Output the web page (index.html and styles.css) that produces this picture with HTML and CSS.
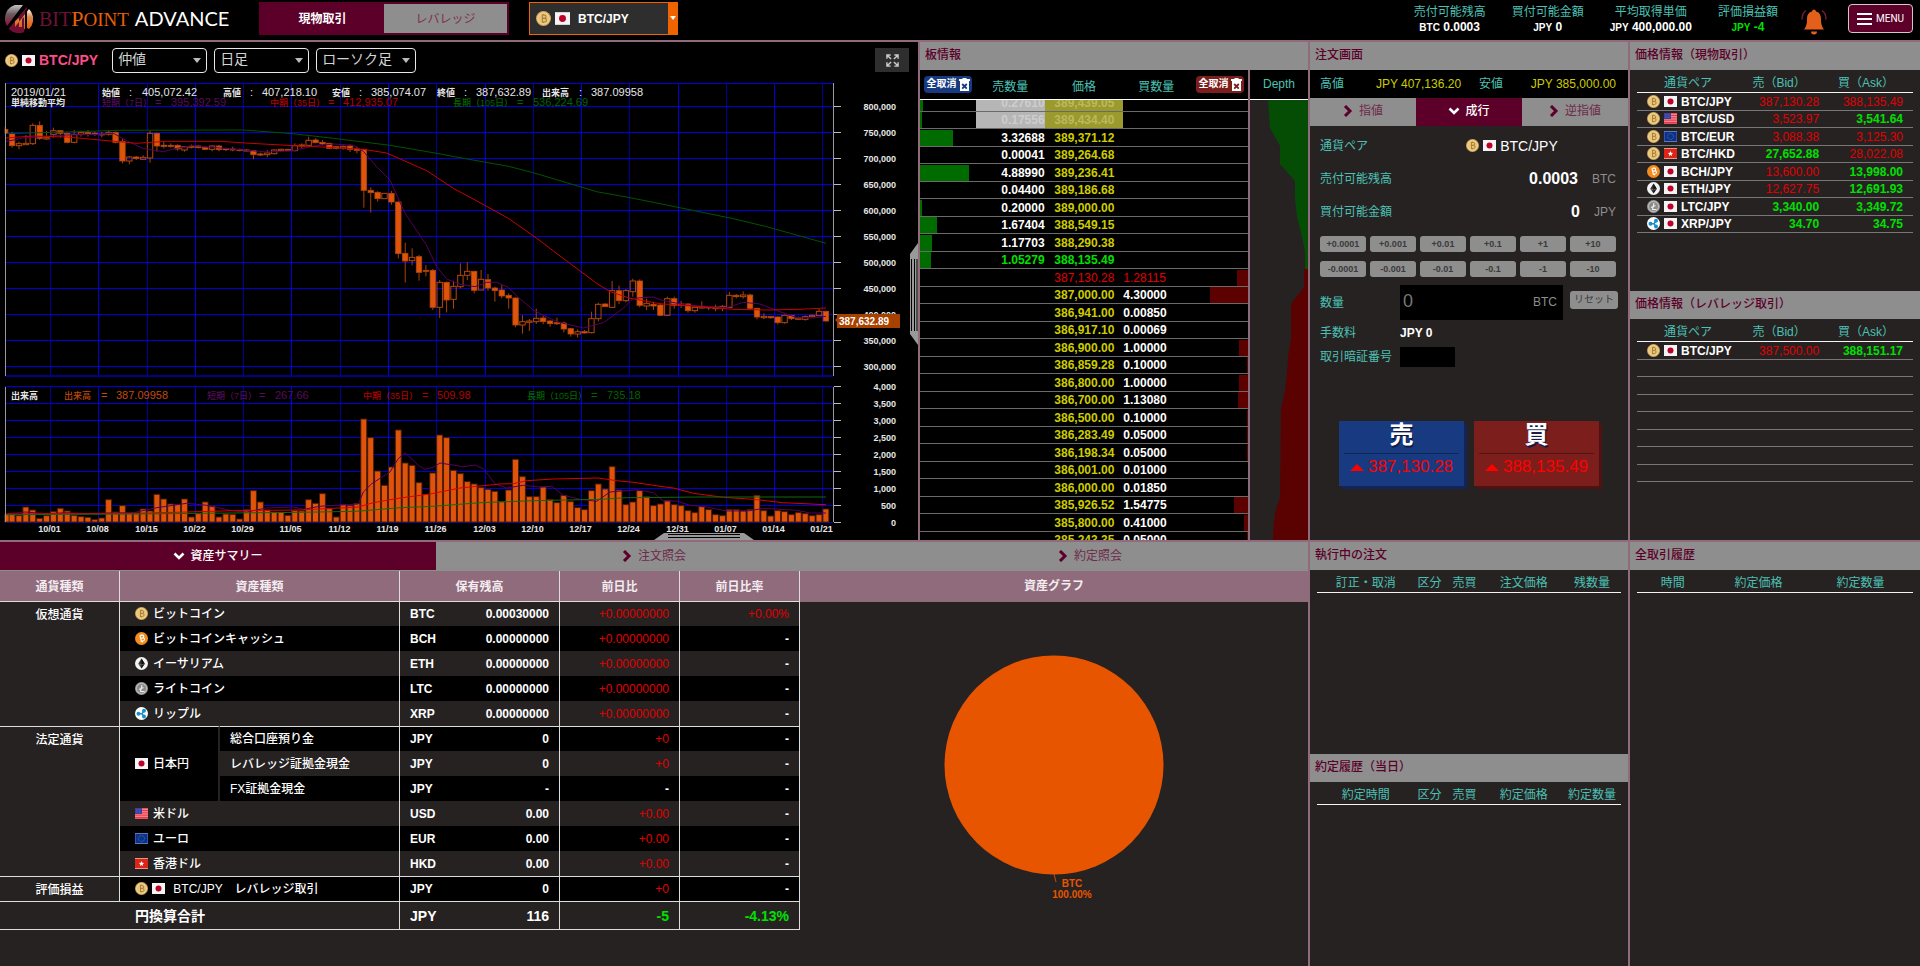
FILE: index.html
```html
<!DOCTYPE html>
<html lang="ja">
<head>
<meta charset="utf-8">
<title>BITPoint ADVANCE</title>
<link rel="stylesheet" href="styles.css">
</head>
<body>
<svg class="defs" aria-hidden="true">
  <defs>
    <linearGradient id="lg1" x1="0" y1="0" x2="0" y2="1"><stop offset="0" stop-color="#c9c9c9"/><stop offset=".45" stop-color="#6b5a60"/><stop offset="1" stop-color="#8a1136"/></linearGradient>
    <linearGradient id="lg2" x1="0" y1="0" x2="0" y2="1"><stop offset="0" stop-color="#fff"/><stop offset=".4" stop-color="#d98a4a"/><stop offset="1" stop-color="#e85a05"/></linearGradient>
    <symbol id="btc" viewBox="0 0 26 26"><circle cx="13" cy="13" r="13" fill="#d4a656"/><circle cx="13" cy="13" r="10" fill="#e6c478" stroke="#f5e2aa" stroke-width="1.500"/><path d="M10 7h4.500a2.800 2.800 0 0 1 0 5.800H11h4a3 3 0 0 1 0 6.200h-5M11 7v12M12.500 5v2M12.500 19v2" fill="none" stroke="#a87c38" stroke-width="1.800"/></symbol>
    <symbol id="bch" viewBox="0 0 26 26"><circle cx="13" cy="13" r="13" fill="#f68b1f"/><path d="M9 8l5-1.500a2.700 2.700 0 0 1 1.500 5.200L11 13l4.500-1.200a3 3 0 0 1 1.500 5.800L11.500 19M10 8l3 11M12 5l.6 2M14.500 18.500l.6 2" fill="none" stroke="#fff" stroke-width="2.200"/></symbol>
    <symbol id="eth" viewBox="0 0 26 26"><circle cx="13" cy="13" r="13" fill="#f4f4f4"/><path d="M13 3l6.500 10.500L13 23 6.500 13.500z" fill="#333"/><path d="M13 3v20l6.500-9.500z" fill="#111"/><path d="M6.500 13.500L13 16l6.500-2.500" fill="none" stroke="#aaa" stroke-width="1"/></symbol>
    <symbol id="ltc" viewBox="0 0 26 26"><circle cx="13" cy="13" r="13" fill="#9b9b9b"/><circle cx="13" cy="13" r="10" fill="#8a8a8a" stroke="#cfcfcf" stroke-width="1.500"/><path d="M14 6l-3 13h8M8 15l9-4" fill="none" stroke="#eee" stroke-width="2.200"/></symbol>
    <symbol id="xrp" viewBox="0 0 26 26"><circle cx="13" cy="13" r="13" fill="#fff"/><path d="M7 13.500h7l4-6M14 13.500l4 6" fill="none" stroke="#1a8fd0" stroke-width="3"/><circle cx="7" cy="13.500" r="4" fill="#1a8fd0"/><circle cx="18" cy="7.500" r="4" fill="#1a8fd0"/><circle cx="18" cy="19" r="4" fill="#1a8fd0"/></symbol>
    <symbol id="jp" viewBox="0 0 26 22"><path d="M0 0h26v22H0z" fill="#f4f4f4"/><circle cx="13" cy="11" r="6" fill="#bc0028"/></symbol>
    <symbol id="us" viewBox="0 0 26 22"><path d="M0 0h26v22H0z" fill="#f4a3a8"/><path d="M0 1.500h26M0 5h26M0 8.500h26M0 12h26M0 15.500h26M0 19h26M0 21.500h26" stroke="#e8323e" stroke-width="1.900"/><path d="M0 0h14v12H0z" fill="#3c3f9e"/><path d="M2 3h10M2 6h10M2 9h10" stroke="#7476c4" stroke-width="1" stroke-dasharray="1.500 1.500"/></symbol>
    <symbol id="eu" viewBox="0 0 26 22"><path d="M0 0h26v22H0z" fill="#5d78b5"/><path d="M1 2h24v18H1z" fill="#0a3190"/><circle cx="13" cy="11" r="6" fill="none" stroke="#74855f" stroke-width="1.600" stroke-dasharray="1.600 1.540"/></symbol>
    <symbol id="hk" viewBox="0 0 26 22"><path d="M0 0h26v22H0z" fill="#e9b9b5"/><path d="M0 1.500h26v19H0z" fill="#dc2516"/><path d="M13 6l1.500 3.400 3.700.4-2.800 2.500.8 3.700-3.200-1.900L9.800 16l.8-3.700-2.800-2.500 3.700-.4z" fill="#fff"/></symbol>
    <symbol id="right" viewBox="0 0 10 12"><path d="M2 1L7 6l-5 5" fill="none" stroke="currentColor" stroke-width="3"/></symbol>
    <symbol id="down" viewBox="0 0 12 10"><path d="M1.500 2.500L6 7l4.500-4.500" fill="none" stroke="currentColor" stroke-width="2.600"/></symbol>
    <symbol id="trash" viewBox="0 0 11 13"><path d="M0 1h3.500V0h4v1H11v2H0zM1 3h9v10H1z" fill="#fff"/><path d="M3.200 6l4.600 4.600M7.800 6l-4.600 4.600" stroke="var(--x)" stroke-width="1.800"/></symbol>
  </defs>
</svg>

<header class="top">
  <div class="brand">
    <svg class="brand-mark" viewBox="0 0 28 28" aria-hidden="true"><path d="M18 0A14 14 0 0 0 0 14a12 12 0 0 0 2 7z" fill="url(#lg1)"/><path d="M22 1L3 23a14 14 0 0 0 11 5 9 9 0 0 0 5-1l2-7z" fill="#6f0f33"/><path d="M24 4L10 22V16l4-3v9h3v-8l2-2v12l3-1 2 1a14 14 0 0 0 0-20z" fill="url(#lg2)"/><path d="M22 0L2 24" stroke="#000" stroke-width="2"/><path d="M21 5v20" stroke="#000" stroke-width="2"/></svg>
    <span class="brand-name"><span class="bit">BIT</span><span class="point">P<small>OINT</small></span><span class="adv">ADVANCE</span></span>
  </div>
  <nav class="modes"><button class="mode on">現物取引</button><button class="mode">レバレッジ</button></nav>
  <label class="pair-select"><svg class="coin"><use href="#btc"/></svg><svg class="flag"><use href="#jp"/></svg>
    <select aria-label="通貨ペア選択"><option>BTC/JPY</option></select></label>
  <dl class="stats">
    <div><dt>売付可能残高</dt><dd><small>BTC</small> 0.0003</dd></div>
    <div><dt>買付可能金額</dt><dd><small>JPY</small> 0</dd></div>
    <div><dt>平均取得単価</dt><dd><small>JPY</small> 400,000.00</dd></div>
    <div><dt>評価損益額</dt><dd class="up"><small>JPY</small> -4</dd></div>
  </dl>
  <button class="bell" aria-label="お知らせ"><svg viewBox="0 0 26 26"><path d="M13 1c1 0 2 1 2 2 4 1 5 4 5 8 0 5 1 7 3 10H3c2-3 3-5 3-10 0-4 1-7 5-8 0-1 1-2 2-2zM10 23h6a3 3 0 0 1-6 0z" fill="#e2601a"/><path d="M5 2C2 4 1 6 1 11M21 2c3 2 4 4 4 9" fill="none" stroke="#7a1c3c" stroke-width="1.500"/></svg></button>
  <button class="menu"><span class="bars"></span>MENU</button>
</header>

<main class="grid">
  <section class="chart-panel">
    <div class="chart-tools">
      <svg class="coin"><use href="#btc"/></svg><svg class="flag"><use href="#jp"/></svg>
      <h1>BTC/JPY</h1>
      <span class="pick"><select aria-label="値種別"><option>仲値</option></select></span>
      <span class="pick"><select aria-label="足種"><option>日足</option></select></span>
      <span class="pick wide"><select aria-label="チャート種別"><option>ローソク足</option></select></span>
      <button class="expand" aria-label="拡大"><svg viewBox="0 0 14 14"><path d="M1 5V1h4M9 1h4v4M13 9v4H9M5 13H1V9M1.500 1.500l4 4M12.500 1.500l-4 4M12.500 12.500l-4-4M1.500 12.500l4-4" fill="none" stroke="#ccc" stroke-width="1.500"/></svg></button>
    </div>
    <svg class="chart" id="chart" viewBox="0 82 918 458" preserveAspectRatio="xMinYMin meet" role="img" aria-label="BTC/JPY チャート">
      <g id="gridlines"></g><g id="series"></g><g id="axes"></g>
      <g class="leg w">
        <text x="11" y="96">2019/01/21</text>
        <text class="j" x="102" y="96">始値</text><text x="129" y="96">:</text><text x="142" y="96">405,072.42</text>
        <text class="j" x="223" y="96">高値</text><text x="250" y="96">:</text><text x="262" y="96">407,218.10</text>
        <text class="j" x="332" y="96">安値</text><text x="359" y="96">:</text><text x="371" y="96">385,074.07</text>
        <text class="j" x="437" y="96">終値</text><text x="464" y="96">:</text><text x="476" y="96">387,632.89</text>
        <text class="j" x="542" y="96">出来高</text><text x="579" y="96">:</text><text x="591" y="96">387.09958</text>
        <text class="j" x="11" y="106">単純移動平均</text><text class="j" x="11" y="399">出来高</text>
      </g>
      <g class="leg p"><text class="j" x="102" y="106">短期（7日）</text><text x="155" y="106">=</text><text x="171" y="106">395,392.59</text><text class="j" x="207" y="399">短期（7日）</text><text x="259" y="399">=</text><text x="275" y="399">267.66</text></g>
      <g class="leg r"><text class="j" x="270" y="106">中期（35日）</text><text x="328" y="106">=</text><text x="343" y="106">412,935.07</text><text class="j" x="363" y="399">中期（35日）</text><text x="422" y="399">=</text><text x="437" y="399">509.98</text></g>
      <g class="leg g"><text class="j" x="453" y="106">長期（105日）</text><text x="517" y="106">=</text><text x="533" y="106">536,224.69</text><text class="j" x="527" y="399">長期（105日）</text><text x="591" y="399">=</text><text x="607" y="399">735.18</text></g>
      <g class="leg o"><text class="j" x="64" y="399">出来高</text><text x="101" y="399">=</text><text x="116" y="399">387.09958</text></g>
      <g><path d="M835 320l2-2v-4h63v14h-63v-6z" fill="#a84100"/><text class="tag" x="839" y="325">387,632.89</text></g>
      <path d="M918 243l-8 11v80l8 11z" fill="#999"/><path d="M911.500 259v72M914.500 259v72M917 259v72" stroke="#000"/>
      <path d="M654 540l10-7h80l10 7z" fill="#999"/><path d="M668 534.500h72M668 537.500h72" stroke="#000"/>
    </svg>
  </section>

  <section class="board">
    <h2 class="head">板情報</h2>
    <div class="board-main">
      <table class="bt bt-head"><colgroup><col class="c1"><col class="c2"><col class="c3"><col class="c4"><col class="c5"></colgroup>
        <tr><th class="l"><button class="cancel sell">全取消<svg><use href="#trash"/></svg></button></th><th>売数量</th><th>価格</th><th>買数量</th><th class="rt"><button class="cancel buy">全取消<svg><use href="#trash"/></svg></button></th></tr></table>
      <div class="clip"><table class="bt bt-body"><colgroup><col class="c1"><col class="c2"><col class="c3"><col class="c4"><col class="c5"></colgroup><tbody>
        <tr class="hl"><td><i style="width:3px"></i></td><td>0.27610</td><td>389,439.05</td><td></td><td></td></tr>
        <tr class="hl"><td><i style="width:2px"></i></td><td>0.17556</td><td>389,434.40</td><td></td><td></td></tr>
        <tr><td><i style="width:33px"></i></td><td>3.32688</td><td>389,371.12</td><td></td><td></td></tr>
        <tr><td></td><td>0.00041</td><td>389,264.68</td><td></td><td></td></tr>
        <tr><td><i style="width:49px"></i></td><td>4.88990</td><td>389,236.41</td><td></td><td></td></tr>
        <tr><td></td><td>0.04400</td><td>389,186.68</td><td></td><td></td></tr>
        <tr><td><i style="width:2px"></i></td><td>0.20000</td><td>389,000.00</td><td></td><td></td></tr>
        <tr><td><i style="width:17px"></i></td><td>1.67404</td><td>388,549.15</td><td></td><td></td></tr>
        <tr><td><i style="width:12px"></i></td><td>1.17703</td><td>388,290.38</td><td></td><td></td></tr>
        <tr class="ask"><td><i style="width:11px"></i></td><td>1.05279</td><td>388,135.49</td><td></td><td></td></tr>
        <tr class="bid"><td></td><td></td><td>387,130.28</td><td>1.28115</td><td><i style="width:11px"></i></td></tr>
        <tr><td></td><td></td><td>387,000.00</td><td>4.30000</td><td><i style="width:38px"></i></td></tr>
        <tr><td></td><td></td><td>386,941.00</td><td>0.00850</td><td></td></tr>
        <tr><td></td><td></td><td>386,917.10</td><td>0.00069</td><td></td></tr>
        <tr><td></td><td></td><td>386,900.00</td><td>1.00000</td><td><i style="width:9px"></i></td></tr>
        <tr><td></td><td></td><td>386,859.28</td><td>0.10000</td><td><i style="width:1px"></i></td></tr>
        <tr><td></td><td></td><td>386,800.00</td><td>1.00000</td><td><i style="width:9px"></i></td></tr>
        <tr><td></td><td></td><td>386,700.00</td><td>1.13080</td><td><i style="width:10px"></i></td></tr>
        <tr><td></td><td></td><td>386,500.00</td><td>0.10000</td><td><i style="width:1px"></i></td></tr>
        <tr><td></td><td></td><td>386,283.49</td><td>0.05000</td><td><i style="width:1px"></i></td></tr>
        <tr><td></td><td></td><td>386,198.34</td><td>0.05000</td><td><i style="width:1px"></i></td></tr>
        <tr><td></td><td></td><td>386,001.00</td><td>0.01000</td><td></td></tr>
        <tr><td></td><td></td><td>386,000.00</td><td>0.01850</td><td></td></tr>
        <tr><td></td><td></td><td>385,926.52</td><td>1.54775</td><td><i style="width:14px"></i></td></tr>
        <tr><td></td><td></td><td>385,800.00</td><td>0.41000</td><td><i style="width:4px"></i></td></tr>
        <tr><td></td><td></td><td>385,243.35</td><td>0.05000</td><td><i style="width:1px"></i></td></tr>
      </tbody></table></div>
    </div>
    <div class="depth">
      <h3>Depth</h3>
      <svg viewBox="0 0 58 440" preserveAspectRatio="none" aria-hidden="true"><path d="M18 0l2 28 10 18v18l15 17v18l2 18 4 16 4 18v18h3V0z" fill="#054c05"/><path d="M54 169v18l-13 17v35l-3 18-1 16-2 18-4 18-1 88-5 16-2 20v7h35V169z" fill="#5a0202"/></svg>
    </div>
  </section>

  <section class="order">
    <h2 class="head">注文画面</h2>
    <div class="hilo"><span>高値</span><b>JPY 407,136.20</b><span>安値</span><b>JPY 385,000.00</b></div>
    <nav class="tabs"><button class="tab"><svg class="ar"><use href="#right"/></svg>指値</button><button class="tab on"><svg class="ad"><use href="#down"/></svg>成行</button><button class="tab"><svg class="ar"><use href="#right"/></svg>逆指値</button></nav>
    <form class="ticket">
      <div class="line"><span>通貨ペア</span><span class="pair"><svg class="coin"><use href="#btc"/></svg><svg class="flag"><use href="#jp"/></svg>BTC/JPY</span></div>
      <div class="line"><span>売付可能残高</span><strong>0.0003</strong><em>BTC</em></div>
      <div class="line"><span>買付可能金額</span><strong>0</strong><em>JPY</em></div>
      <div class="steps"><button type="button">+0.0001</button><button type="button">+0.001</button><button type="button">+0.01</button><button type="button">+0.1</button><button type="button">+1</button><button type="button">+10</button><button type="button">-0.0001</button><button type="button">-0.001</button><button type="button">-0.01</button><button type="button">-0.1</button><button type="button">-1</button><button type="button">-10</button></div>
      <div class="field"><label for="qty">数量</label><span class="qty"><input id="qty" placeholder="0"><em>BTC</em></span><button type="button" class="reset">リセット</button></div>
      <div class="field fee"><span>手数料</span><b>JPY 0</b></div>
      <div class="field pin"><label for="pin">取引暗証番号</label><input id="pin" type="password"></div>
      <div class="deal"><button type="button" class="sell"><strong>売</strong><span><i></i>387,130.28</span></button><button type="button" class="buy"><strong>買</strong><span><i></i>388,135.49</span></button></div>
    </form>
  </section>

  <section class="prices">
    <div>
      <h2 class="head">価格情報（現物取引）</h2>
      <table class="pt"><colgroup><col class="p1"><col class="p2"><col class="p3"></colgroup><thead><tr><th>通貨ペア</th><th>売（Bid）</th><th>買（Ask）</th></tr></thead><tbody>
        <tr><td><svg class="coin"><use href="#btc"/></svg><svg class="flag"><use href="#jp"/></svg>BTC/JPY</td><td class="dn">387,130.28</td><td class="dn">388,135.49</td></tr>
        <tr><td><svg class="coin"><use href="#btc"/></svg><svg class="flag"><use href="#us"/></svg>BTC/USD</td><td class="dn">3,523.97</td><td class="up">3,541.64</td></tr>
        <tr><td><svg class="coin"><use href="#btc"/></svg><svg class="flag"><use href="#eu"/></svg>BTC/EUR</td><td class="dn">3,088.38</td><td class="dn">3,125.30</td></tr>
        <tr><td><svg class="coin"><use href="#btc"/></svg><svg class="flag"><use href="#hk"/></svg>BTC/HKD</td><td class="up">27,652.88</td><td class="dn">28,022.08</td></tr>
        <tr><td><svg class="coin"><use href="#bch"/></svg><svg class="flag"><use href="#jp"/></svg>BCH/JPY</td><td class="dn">13,600.00</td><td class="up">13,998.00</td></tr>
        <tr><td><svg class="coin"><use href="#eth"/></svg><svg class="flag"><use href="#jp"/></svg>ETH/JPY</td><td class="dn">12,627.75</td><td class="up">12,691.93</td></tr>
        <tr><td><svg class="coin"><use href="#ltc"/></svg><svg class="flag"><use href="#jp"/></svg>LTC/JPY</td><td class="up">3,340.00</td><td class="up">3,349.72</td></tr>
        <tr><td><svg class="coin"><use href="#xrp"/></svg><svg class="flag"><use href="#jp"/></svg>XRP/JPY</td><td class="up">34.70</td><td class="up">34.75</td></tr>
      </tbody></table>
    </div>
    <div>
      <h2 class="head">価格情報（レバレッジ取引）</h2>
      <table class="pt"><colgroup><col class="p1"><col class="p2"><col class="p3"></colgroup><thead><tr><th>通貨ペア</th><th>売（Bid）</th><th>買（Ask）</th></tr></thead><tbody>
        <tr><td><svg class="coin"><use href="#btc"/></svg><svg class="flag"><use href="#jp"/></svg>BTC/JPY</td><td class="dn">387,500.00</td><td class="up">388,151.17</td></tr>
        <tr><td></td><td></td><td></td></tr><tr><td></td><td></td><td></td></tr><tr><td></td><td></td><td></td></tr><tr><td></td><td></td><td></td></tr><tr><td></td><td></td><td></td></tr><tr><td></td><td></td><td></td></tr><tr><td></td><td></td><td></td></tr>
      </tbody></table>
    </div>
  </section>

  <section class="assets">
    <nav class="tabs"><button class="tab on"><svg class="ad"><use href="#down"/></svg>資産サマリー</button><button class="tab"><svg class="ar"><use href="#right"/></svg>注文照会</button><button class="tab"><svg class="ar"><use href="#right"/></svg>約定照会</button></nav>
    <div class="assets-body">
      <table class="at"><colgroup><col class="a1"><col class="a2"><col class="a3"><col class="a4"><col class="a5"><col class="a6"><col class="a6"></colgroup>
        <thead><tr><th>通貨種類</th><th colspan="2">資産種類</th><th colspan="2">保有残高</th><th>前日比</th><th>前日比率</th></tr></thead>
        <tbody>
          <tr><th rowspan="5">仮想通貨</th><td class="nm" colspan="2"><svg class="coin"><use href="#btc"/></svg>ビットコイン</td><td class="un">BTC</td><td>0.00030000</td><td class="dn">+0.00000000</td><td class="dn">+0.00%</td></tr>
          <tr><td class="nm" colspan="2"><svg class="coin"><use href="#bch"/></svg>ビットコインキャッシュ</td><td class="un">BCH</td><td>0.00000000</td><td class="dn">+0.00000000</td><td>-</td></tr>
          <tr><td class="nm" colspan="2"><svg class="coin"><use href="#eth"/></svg>イーサリアム</td><td class="un">ETH</td><td>0.00000000</td><td class="dn">+0.00000000</td><td>-</td></tr>
          <tr><td class="nm" colspan="2"><svg class="coin"><use href="#ltc"/></svg>ライトコイン</td><td class="un">LTC</td><td>0.00000000</td><td class="dn">+0.00000000</td><td>-</td></tr>
          <tr><td class="nm" colspan="2"><svg class="coin"><use href="#xrp"/></svg>リップル</td><td class="un">XRP</td><td>0.00000000</td><td class="dn">+0.00000000</td><td>-</td></tr>
        </tbody>
        <tbody class="fiat">
          <tr><th rowspan="6">法定通貨</th><td class="nm yen" rowspan="3"><svg class="flag"><use href="#jp"/></svg>日本円</td><td class="sub">総合口座預り金</td><td class="un">JPY</td><td>0</td><td class="dn">+0</td><td>-</td></tr>
          <tr><td class="sub">レバレッジ証拠金現金</td><td class="un">JPY</td><td>0</td><td class="dn">+0</td><td>-</td></tr>
          <tr><td class="sub">FX証拠金現金</td><td class="un">JPY</td><td>-</td><td>-</td><td>-</td></tr>
          <tr><td class="nm" colspan="2"><svg class="flag"><use href="#us"/></svg>米ドル</td><td class="un">USD</td><td>0.00</td><td class="dn">+0.00</td><td>-</td></tr>
          <tr><td class="nm" colspan="2"><svg class="flag"><use href="#eu"/></svg>ユーロ</td><td class="un">EUR</td><td>0.00</td><td class="dn">+0.00</td><td>-</td></tr>
          <tr><td class="nm" colspan="2"><svg class="flag"><use href="#hk"/></svg>香港ドル</td><td class="un">HKD</td><td>0.00</td><td class="dn">+0.00</td><td>-</td></tr>
        </tbody>
        <tbody class="pl">
          <tr><th>評価損益</th><td class="nm" colspan="2"><svg class="coin"><use href="#btc"/></svg><svg class="flag"><use href="#jp"/></svg> BTC/JPY　レバレッジ取引</td><td class="un">JPY</td><td>0</td><td class="dn">+0</td><td>-</td></tr>
        </tbody>
        <tfoot><tr><td class="blank"></td><td class="nm" colspan="2">円換算合計</td><td class="un">JPY</td><td>116</td><td class="up">-5</td><td class="up">-4.13%</td></tr></tfoot>
      </table>
      <div class="pie">
        <h3>資産グラフ</h3>
        <svg viewBox="0 0 240 260" role="img" aria-label="BTC 100.00%"><circle cx="120" cy="111" r="109.500" fill="#e85500"/><path d="M120 220l2 8" stroke="#c84a05"/><text x="138" y="233">BTC</text><text x="138" y="244">100.00%</text></svg>
      </div>
    </div>
  </section>

  <section class="execs">
    <div><h2 class="head">執行中の注文</h2>
      <table class="pt et"><colgroup><col class="e1"><col class="e2"><col class="e3"><col class="e4"><col class="e5"></colgroup><thead><tr><th>訂正・取消</th><th>区分</th><th>売買</th><th>注文価格</th><th>残数量</th></tr></thead></table></div>
    <div><h2 class="head">約定履歴（当日）</h2>
      <table class="pt et"><colgroup><col class="e1"><col class="e2"><col class="e3"><col class="e4"><col class="e5"></colgroup><thead><tr><th>約定時間</th><th>区分</th><th>売買</th><th>約定価格</th><th>約定数量</th></tr></thead></table></div>
  </section>
  <section class="history"><h2 class="head">全取引履歴</h2>
    <table class="pt"><colgroup><col class="h1"><col class="h2"><col class="h3"></colgroup><thead><tr><th>時間</th><th>約定価格</th><th>約定数量</th></tr></thead></table></section>
</main>
<script src="chart.js"></script>
</body>
</html>
```

FILE: styles.css
```css
* { box-sizing: border-box; }
:root { --wine: #5c0029; --mauve: #8f6b7c; --grey: #8e8e8e; --dark: #262222; --teal: #4cc0b4; --yellow: #cccc00; --red: #e00000; --green: #00e000; --navy: #173a80; --brick: #7c1e1c; }
html, body { height: 100%; }
body { margin: 0; background: #000; color: #fff; font: 12px/16px "Liberation Sans", "Noto Sans CJK JP", sans-serif; display: flex; flex-direction: column; overflow: hidden; }
button, select, input { font: inherit; color: inherit; margin: 0; padding: 0; border: 0; background: none; border-radius: 0; }
h1, h2, h3, dl, dd { margin: 0; font-size: 12px; font-weight: 400; }
em, i { font-style: normal; }
table { border-collapse: separate; border-spacing: 0; table-layout: fixed; width: 100%; }
th, td { padding: 0; font-weight: 400; }
.defs { position: absolute; width: 0; height: 0; }
.coin { width: 13px; height: 13px; flex: none; vertical-align: middle; }
.flag { width: 13px; height: 11px; flex: none; vertical-align: middle; margin-left: 4px; }
.up { color: var(--green); font-weight: 700; }
td.dn { color: var(--red); font-weight: 400; }

/* header */
.top { flex: none; height: 42px; border-bottom: 2px solid var(--mauve); display: flex; align-items: flex-start; padding: 2px 7px 0 5px; }
.brand { width: 254px; display: flex; align-items: center; gap: 6px; height: 34px; }
.brand-mark { width: 28px; height: 28px; }
.brand-name { display: flex; align-items: baseline; line-height: 28px; white-space: nowrap; }
.bit, .point { font-family: "Liberation Serif", serif; font-size: 20px; }
.bit { color: #6c1238; }
.point { color: #e86006; font-size: 22px; margin-right: 6px; }
.point small { font-size: 19px; }
.adv { font-family: Lato, sans-serif; font-size: 20px; }
.modes { display: flex; width: 250px; height: 33px; border: 2px solid var(--wine); background: var(--wine); }
.mode { flex: 1; background: var(--grey); color: #7d2f50; }
.mode.on { background: var(--wine); color: #fff; font-weight: 700; }
.pair-select { position: relative; display: flex; align-items: center; margin-left: 20px; width: 149px; height: 33px; padding-left: 6px; background: #2e2e2e; border: 1px solid #f06400; border-right-width: 10px; font-weight: 700; }
.pair-select .coin { width: 15px; height: 15px; }
.pair-select .flag { width: 15px; height: 13px; }
.pair-select select { appearance: none; flex: 1; padding-left: 8px; font-weight: 700; }
.pair-select::after { content: ""; position: absolute; right: -8px; top: 13px; border: 3px solid transparent; border-top: 4px solid #fff; }
.stats { margin-left: auto; display: flex; gap: 26px; text-align: center; }
.stats dt { color: var(--teal); line-height: 20px; font-weight: 400; }
.stats dd { line-height: 10px; font-weight: 700; white-space: nowrap; }
.stats small { font-size: 10px; }
.bell { margin: 5px 21px 0 23px; width: 26px; height: 28px; }
.bell svg { width: 26px; height: 27px; display: block; }
.menu { margin-top: 2px; width: 65px; height: 29px; display: flex; align-items: center; gap: 4px; padding-left: 8px; background: var(--wine); border: 1px solid #d8c5cc; border-radius: 4px; font-family: Roboto, sans-serif; font-size: 10px; }
.bars { width: 15px; height: 12px; border-top: 2px solid #fff; border-bottom: 2px solid #fff; background: linear-gradient(#fff, #fff) center / 100% 2px no-repeat; }

/* panels */
.grid { flex: 1; min-height: 0; display: grid; grid-template-columns: 92fr 39fr 32fr 29fr; grid-template-rows: 125fr 106fr; }
.grid > section { min-width: 0; min-height: 0; overflow: hidden; background: var(--dark); border-right: 2px solid var(--mauve); }
.grid > .chart-panel, .grid > .board, .grid > .order, .grid > .prices { border-bottom: 2px solid var(--mauve); }
.grid > .prices, .grid > .history { border-right: 0; }
.head { height: 28px; line-height: 26px; padding-left: 5px; background: var(--grey); color: var(--wine); font-weight: 500; }
.tabs { display: flex; height: 28px; }
.tab { flex: 1; display: flex; align-items: center; justify-content: center; gap: 6px; background: var(--grey); color: #6e2a49; padding-bottom: 3px; }
.tab.on { background: var(--wine); color: #fff; font-weight: 500; gap: 5px; }
.ar { width: 10px; height: 12px; color: var(--wine); }
.ad { width: 12px; height: 10px; }

/* chart */
.grid > .chart-panel { background: #000; display: flex; flex-direction: column; }
.chart-tools { flex: none; height: 40px; display: flex; align-items: center; padding: 0 9px 4px 5px; }
.chart-tools h1 { font-size: 14px; font-weight: 700; color: #ff4d88; margin: 0 14px 0 4px; }
.pick { position: relative; width: 95px; height: 25px; margin-right: 7px; }
.pick.wide { width: 100px; }
.pick select { appearance: none; width: 100%; height: 100%; padding: 0 20px 2px 5px; border: 1px solid #e8e8e8; border-radius: 4px; font-size: 14px; color: #d4d4d4; }
.pick::after { content: ""; position: absolute; right: 6px; top: 10px; border: 4px solid transparent; border-top: 5px solid #bbb; pointer-events: none; }
.expand { margin-left: auto; width: 34px; height: 24px; background: #2e2e2e; display: grid; place-items: center; }
.expand svg { width: 13px; height: 13px; }
.chart { width: 100%; flex: 1; min-height: 0; display: block; }
.chart text { font-size: 11px; }
.chart .j { font-size: 9px; font-weight: 500; }
.leg.w { fill: #e6e6e6; }
.chart .leg.w .j { font-weight: 700; }
.leg.p { fill: #560c5c; }
.leg.r { fill: #b00000; }
.leg.g { fill: #006400; }
.leg.o { fill: #c04a0c; }
.chart .axis { font-size: 9px; font-weight: 700; fill: #e6e6e6; }
.chart .tag { font-size: 10px; font-weight: 700; fill: #fff; }

/* order book */
.grid > .board { display: grid; grid-template-columns: 1fr 58px; grid-template-rows: 28px 1fr; background: #000; }
.board .head { grid-column: 1 / 3; }
.board-main { min-height: 0; display: flex; flex-direction: column; border-right: 2px solid var(--mauve); }
.c1 { width: 17%; } .c2 { width: 21%; } .c3 { width: 24%; } .c4 { width: 20%; } .c5 { width: 18%; }
.bt-head { flex: none; height: 30px; border-bottom: 1px solid #fff; }
.bt-head th { color: var(--teal); padding-top: 5px; }
.bt-head th.l { text-align: left; padding: 0 0 1px 4px; }
.bt-head th.rt { text-align: right; padding: 0 4px 1px 0; }
.cancel { display: inline-flex; align-items: center; justify-content: center; gap: 2px; width: 48px; height: 17px; border-radius: 4px; font-size: 10px; line-height: 14px; font-weight: 700; color: #fff; background: var(--navy); --x: var(--navy); }
.cancel.buy { background: var(--brick); --x: var(--brick); }
.cancel svg { width: 11px; height: 13px; }
.clip { flex: 1; min-height: 0; overflow: hidden; }
.bt-body { margin-top: -6px; }
.bt-body tr { height: 18px; }
.bt-body tr:nth-child(even) { height: 17px; }
.bt-body td { border-bottom: 1px solid #6a6a6a; line-height: 16px; text-align: right; font-weight: 700; }
.bt-body td:nth-child(3) { color: var(--yellow); padding-right: 9px; }
.bt-body td:nth-child(4) { text-align: left; }
.bt-body td i { display: block; height: 16px; background: #006c00; }
.bt-body td:last-child i { margin-left: auto; background: #5c0000; }
.bt-body .hl td:nth-child(2) { background: #b6b6b6; color: #cdcdcd; }
.bt-body .hl td:nth-child(3) { background: #9b9a2e; color: #bbb95c; }
.bt-body .ask td, .bt-body .ask td:nth-child(3) { color: var(--green); }
.bt-body .bid td, .bt-body .bid td:nth-child(3) { color: var(--red); font-weight: 400; }
.depth { display: flex; flex-direction: column; min-height: 0; background: var(--dark); }
.depth h3 { flex: none; height: 30px; line-height: 28px; text-align: center; color: var(--teal); background: #000; border-bottom: 1px solid #fff; }
.depth svg { width: 100%; flex: 1; min-height: 0; display: block; }

/* order form */
.hilo { display: flex; justify-content: space-between; height: 28px; line-height: 28px; padding: 0 12px 0 10px; background: #000; color: var(--teal); }
.hilo b { font-weight: 400; color: var(--yellow); }
.hilo b:first-of-type { margin: 0 -10px 0 4px; }
.ticket { padding: 3px 10px 0; color: var(--teal); }
.line { display: flex; align-items: center; height: 33px; padding-right: 2px; }
.line > span:first-child, .field > :first-child { width: 80px; flex: none; white-space: nowrap; }
.line em, .qty em { color: var(--grey); }
.line strong { margin: 0 14px 0 auto; font-size: 16px; font-weight: 700; color: #fff; }
.pair { flex: 1; display: flex; align-items: center; justify-content: center; padding-left: 8px; font-size: 14px; color: #fff; }
.pair .flag { margin-right: 4px; }
.steps { display: grid; grid-template-columns: repeat(6, 1fr); gap: 9px 4px; padding: 8px 2px 8px 0; }
.steps button, .reset { height: 16px; line-height: 14px; background: var(--grey); color: #3a3a3a; border-radius: 3px; font-size: 10px; }
.steps button { font-size: 9px; font-weight: 700; }
.field { display: flex; align-items: center; }
.qty { display: flex; align-items: center; flex: 1; min-width: 0; height: 35px; padding: 0 6px 2px 3px; background: #000; }
.qty input { flex: 1; width: 0; min-width: 0; font-size: 18px; }
.qty input::placeholder { color: #777; }
.reset { flex: none; width: 48px; height: 18px; margin: 0 0 5px 7px; }
.fee { height: 26px; }
.fee b { color: #fff; }
.pin { height: 22px; }
.pin input { width: 55px; height: 20px; background: #000; }
.deal { display: flex; justify-content: center; gap: 10px; padding-top: 53px; }
.deal button { width: 125px; height: 65px; padding: 0 5px 6px; background: var(--navy); box-shadow: 3px 3px #13245a; }
.deal .buy { background: var(--brick); box-shadow: 3px 3px #4e1212; }
.deal strong { display: block; height: 33px; line-height: 28px; font-size: 24px; font-weight: 700; color: #fff; border-bottom: 1px solid #00000050; text-shadow: 1px 2px #101c48; }
.deal span { display: flex; align-items: center; justify-content: center; gap: 4px; height: 26px; font-size: 17px; color: #f00; }
.deal i { border: 7px solid transparent; border-top: 0; border-bottom-color: #f00; }

/* price and history tables */
.prices, .execs { display: grid; grid-template-rows: 1fr 1fr; }
.prices > div, .execs > div { min-height: 0; overflow: hidden; }
.pt { width: auto; min-width: calc(100% - 14px); margin: 0 7px; }
.pt thead tr { height: 23px; }
.pt th { color: var(--teal); border-bottom: 1px solid #f4f4f4; padding-top: 4px; white-space: nowrap; }
.pt tbody tr { height: 18px; }
.pt tbody tr:nth-child(even) { height: 17px; }
.pt td { height: 17px; border-bottom: 1px solid #777; text-align: right; line-height: 16px; white-space: nowrap; }
.pt td:first-child { text-align: left; padding-left: 10px; font-weight: 700; }
.pt td:nth-child(3) { padding-right: 10px; }
.pt .coin, .pt .flag { margin-top: -2px; }
.pt .flag { margin-right: 4px; }
.p1 { width: 37%; } .p2 { width: 29%; } .p3 { width: 34%; }
.e1 { width: 32%; } .e2 { width: 10%; } .e3 { width: 13%; } .e4 { width: 26%; } .e5 { width: 19%; }
.h1 { width: 26%; } .h2 { width: 36%; } .h3 { width: 38%; }

/* assets */
.assets { grid-column: 1 / 3; }
.assets .tabs { height: 29px; border-bottom: 1px solid var(--grey); }
.assets .tab { padding-bottom: 1px; }
.assets-body { display: flex; }
.at { flex: 0 0 800px; width: 800px; }
.a1 { width: 120px; } .a2 { width: 100px; } .a3 { width: 180px; } .a4 { width: 60px; } .a5 { width: 100px; } .a6 { width: 120px; }
.at tr { height: 25px; }
.at td, .at th { border-right: 1px solid #ddd; line-height: 16px; white-space: nowrap; }
.at td { text-align: right; padding-right: 10px; font-weight: 700; }
.at td.dn { font-weight: 400; }
.at thead tr { height: 30px; }
.at thead th { background: var(--mauve); color: #f4ecf0; font-weight: 700; padding-top: 2px; }
.at tbody tr:first-child > *, .at tfoot tr > * { border-top: 1px solid #ddd; }
.at tbody th { vertical-align: top; padding-top: 5px; font-weight: 500; background: var(--dark); }
.at tbody:first-of-type tr:nth-child(even) td, .at .fiat tr:nth-child(odd) td, .at .pl td { background: #000; }
.at td.nm, .at td.sub { text-align: left; font-weight: 500; }
.at td.nm { padding-left: 15px; }
.at td.nm svg { margin: -2px 5px 0 0; }
.at .pl td.nm .coin { margin-right: 4px; }
.at td.sub { padding-left: 10px; }
.at td.un { text-align: left; padding-left: 10px; border-right: 0; }
.at td.yen { border-right: 2px solid var(--dark); }
.at tfoot tr { height: 29px; }
.at tfoot td, .at tfoot td.nm { font-size: 14px; font-weight: 700; border-bottom: 1px solid #ddd; }
.at tfoot td.blank { border-right: 0; }
.pie { flex: 1; text-align: center; }
.pie h3 { height: 31px; line-height: 31px; background: var(--mauve); color: #f4ecf0; font-weight: 700; margin-bottom: 52px; }
.pie svg { width: 240px; height: 260px; }
.pie text { font-size: 10px; font-weight: 700; fill: #e85500; text-anchor: middle; }
```

FILE: chart.js
```js
(function () {
  var NS = 'http://www.w3.org/2000/svg';
  function add(parent, tag, attrs, text) {
    var el = document.createElementNS(NS, tag);
    for (var k in attrs) el.setAttribute(k, attrs[k]);
    if (text) el.textContent = text;
    document.getElementById(parent).appendChild(el);
  }
  function cx(i) { return 5.2 + 6.897 * i; }

  /* top and bottom of each body, high, low, filled; in thirds of a pixel under y = 80 */
  var candles = [[148,160,140,160,1],[160,197,155,203,1],[191,197,185,208,0],[190,194,165,194,0],[136,191,130,195,0],[136,175,124,180,1],[173,177,153,180,0],[152,163,143,173,0],[152,160,150,173,1],[160,187,158,190,1],[163,187,150,190,0],[158,163,152,170,0],[158,161,150,170,1],[160,163,155,168,0],[162,165,156,172,1],[157,163,150,167,0],[157,187,155,190,1],[184,243,175,250,1],[231,243,228,253,0],[231,236,228,240,1],[232,238,226,240,0],[160,234,153,248,0],[160,198,158,215,1],[196,199,185,205,0],[196,199,190,203,1],[196,207,193,212,1],[200,210,198,215,0],[199,202,194,205,0],[198,203,195,205,1],[203,208,200,210,1],[198,208,196,214,0],[198,209,195,214,1],[206,209,203,213,0],[207,210,200,214,1],[208,212,206,214,1],[210,212,207,214,0],[212,224,210,238,1],[222,225,218,228,0],[219,224,210,232,0],[210,221,208,223,0],[208,212,206,214,0],[208,212,206,214,1],[197,212,190,214,0],[195,198,190,205,0],[181,196,170,199,0],[180,188,175,190,1],[187,192,180,195,1],[190,205,188,207,1],[200,205,198,208,1],[199,204,196,209,0],[198,208,193,216,1],[207,211,200,220,1],[208,331,208,383,1],[331,338,322,398,1],[337,356,334,365,1],[340,356,340,356,0],[340,366,333,374,1],[366,521,364,535,1],[520,543,488,608,1],[532,542,505,556,0],[530,577,525,602,1],[571,574,555,589,1],[571,682,567,690,1],[607,682,600,714,0],[607,660,605,697,1],[619,658,602,686,0],[586,620,550,625,0],[574,586,546,600,0],[574,631,572,640,1],[598,630,570,630,0],[599,624,582,632,1],[624,632,620,665,1],[630,648,615,655,1],[646,654,640,686,1],[654,735,652,742,1],[725,735,706,761,0],[723,727,717,753,0],[715,725,686,732,0],[714,725,706,733,1],[723,731,720,740,1],[728,731,713,735,0],[729,747,725,757,1],[746,762,744,770,1],[755,762,748,773,0],[755,759,750,760,1],[716,758,695,760,0],[673,716,668,724,0],[672,680,670,680,1],[632,682,603,684,0],[632,662,617,672,1],[632,662,627,667,0],[603,635,596,650,0],[603,676,598,682,1],[670,678,656,690,0],[673,678,665,690,1],[675,706,673,708,1],[656,706,650,708,0],[656,676,650,686,1],[672,676,663,684,0],[672,692,670,698,1],[682,692,680,698,0],[680,684,664,685,0],[681,684,680,690,1],[681,686,674,694,0],[679,684,675,694,0],[646,683,636,684,0],[646,650,642,655,1],[645,650,634,656,0],[645,685,641,690,1],[685,711,683,718,1],[709,713,700,717,0],[710,713,708,716,0],[711,728,709,733,1],[706,728,704,731,0],[706,716,704,720,1],[714,718,710,720,0],[710,718,706,722,0],[706,710,704,712,0],[694,707,686,708,0],[694,723,692,725,1]];
  var volumes = [23,23,19,45,36,11,19,31,41,33,20,16,14,7,12,67,30,49,27,27,39,33,83,69,54,53,69,15,25,60,48,15,24,23,9,37,94,60,36,30,29,20,34,33,67,56,85,40,15,52,49,55,309,253,153,110,165,276,177,170,118,83,147,261,253,155,145,121,114,103,98,92,61,96,188,136,76,76,105,67,58,80,61,43,37,94,114,99,166,96,52,60,94,76,49,54,64,52,49,34,28,46,37,22,19,37,37,33,37,80,34,18,34,31,22,28,25,19,22,39];
  var i, k, y;

  for (k = 0; k <= 16; k++) {
    var gx = Math.round(50 + 48.28 * k) + 0.5;
    add('gridlines', 'path', { d: 'M' + gx + ' 83V376M' + gx + ' 387V522', stroke: k % 2 ? '#0000d8' : '#00009c' });
    var d = ['10/01','10/08','10/15','10/22','10/29','11/05','11/12','11/19','11/26','12/03','12/10','12/17','12/24','12/31','01/07','01/14','01/21'][k];
    add('axes', 'text', { x: gx - 1, y: 532, 'text-anchor': 'middle', 'class': 'axis' }, d);
  }
  add('gridlines', 'path', { d: 'M5 83.500H833M5 386.500H833', stroke: '#0000d8' });
  add('gridlines', 'path', { d: 'M5 376H833', stroke: '#000088', 'stroke-width': 2 });
  for (k = 0; k <= 10; k++) {
    y = 106.5 + 26 * k;
    add('gridlines', 'path', { d: 'M5 ' + y + 'H833', stroke: '#0000d8' });
    add('axes', 'path', { d: 'M834 ' + y + 'h7', stroke: '#bbb' });
    add('axes', 'text', { x: 896, y: y + 3, 'text-anchor': 'end', 'class': 'axis' }, (800 - 50 * k) + ',000');
  }
  for (k = 0; k <= 8; k++) {
    y = 386.5 + 17 * k;
    add('gridlines', 'path', { d: 'M5 ' + y + 'H833', stroke: '#0000d8' });
    add('axes', 'path', { d: 'M834 ' + y + 'h7', stroke: '#bbb' });
    add('axes', 'text', { x: 896, y: y + 3, 'text-anchor': 'end', 'class': 'axis' }, (4000 - 500 * k).toLocaleString('en-US'));
  }
  add('axes', 'path', { d: 'M5.500 83V376M5.500 387V522M833.500 83V376M833.500 387V522', stroke: '#999' });

  volumes.forEach(function (v, n) {
    var x = Math.max(cx(n) - 2.6, 5), h = v / 3;
    add('series', 'rect', { x: x - 0.4, y: 522 - h, width: 5.9, height: h, fill: '#e0530a', stroke: '#4a1c04', 'stroke-width': 0.9 });
  });
  candles.forEach(function (c, n) {
    var x = cx(n), t = 80 + c[0] / 3, b = 80 + c[1] / 3;
    add('series', 'path', { d: 'M' + x + ' ' + (80 + c[2] / 3) + 'V' + t + 'M' + x + ' ' + b + 'V' + (80 + c[3] / 3), stroke: '#a84208' });
    var left = Math.max(x - 2.7, 5);
    add('series', 'rect', { x: left, y: t, width: x + 2.7 - left, height: Math.max(b - t, 1), fill: c[4] ? '#e0530a' : 'none', stroke: '#b4480a', 'stroke-width': c[4] ? 0.8 : 1 });
  });

  function curve(points, color, base, dir) {
    var s = '';
    for (i = 0; i < points.length; i += 2) s += (points[i] / 3).toFixed(1) + ',' + (base + dir * points[i + 1] / 3).toFixed(1) + ' ';
    add('series', 'polyline', { points: s, fill: 'none', stroke: color });
  }
  curve([16,161,230,155,360,151,730,150,800,155,880,161,1000,175,1170,196,1310,220,1380,233,1525,259,1600,278,1790,335,1890,353,2000,375,2200,416,2300,440,2478,490], '#005400', 80, 1);
  curve([16,185,70,174,150,168,200,165,300,163,340,160,380,182,430,206,490,215,530,205,580,197,650,203,740,211,800,216,880,212,940,198,1000,192,1060,196,1090,214,1130,260,1170,300,1215,400,1278,493,1310,560,1340,597,1380,613,1425,620,1460,607,1490,607,1525,622,1550,648,1600,690,1670,725,1750,744,1810,728,1870,685,1900,655,1960,651,1990,662,2060,675,2180,683,2230,667,2280,672,2340,695,2390,713,2440,714,2478,709], '#560060', 80, 1);
  curve([16,174,100,168,200,171,300,180,410,190,500,184,660,184,750,190,900,198,1010,203,1090,208,1160,219,1280,272,1360,325,1440,368,1525,415,1610,475,1700,543,1790,610,1830,635,1890,655,1980,671,2100,680,2200,688,2300,690,2400,688,2478,684], '#c80000', 80, 1);
  curve([16,24,75,30,140,25,200,28,250,26,400,28,470,43,520,50,560,56,620,50,700,33,740,30,800,42,880,45,910,38,960,47,1075,54,1090,90,1115,115,1170,150,1195,190,1215,208,1255,170,1275,158,1300,164,1320,177,1390,166,1425,171,1450,160,1485,115,1520,102,1570,110,1620,105,1655,107,1690,80,1740,68,1790,62,1830,90,1910,97,1960,88,1990,63,2030,63,2070,50,2120,45,2180,33,2250,34,2290,41,2390,35,2430,27,2478,27], '#560060', 522, -1);
  curve([16,24,400,26,560,30,700,34,900,36,1075,45,1120,58,1200,72,1290,84,1380,102,1500,114,1540,115,1580,124,1660,129,1795,132,1850,124,1900,119,1980,107,2020,102,2080,86,2170,74,2260,68,2350,58,2478,52], '#d80000', 522, -1);
  curve([16,22,400,24,900,29,1070,32,1200,43,1300,47,1440,58,1600,64,1800,68,1880,73,2100,75,2478,75], '#106810', 522, -1);
})();
```
